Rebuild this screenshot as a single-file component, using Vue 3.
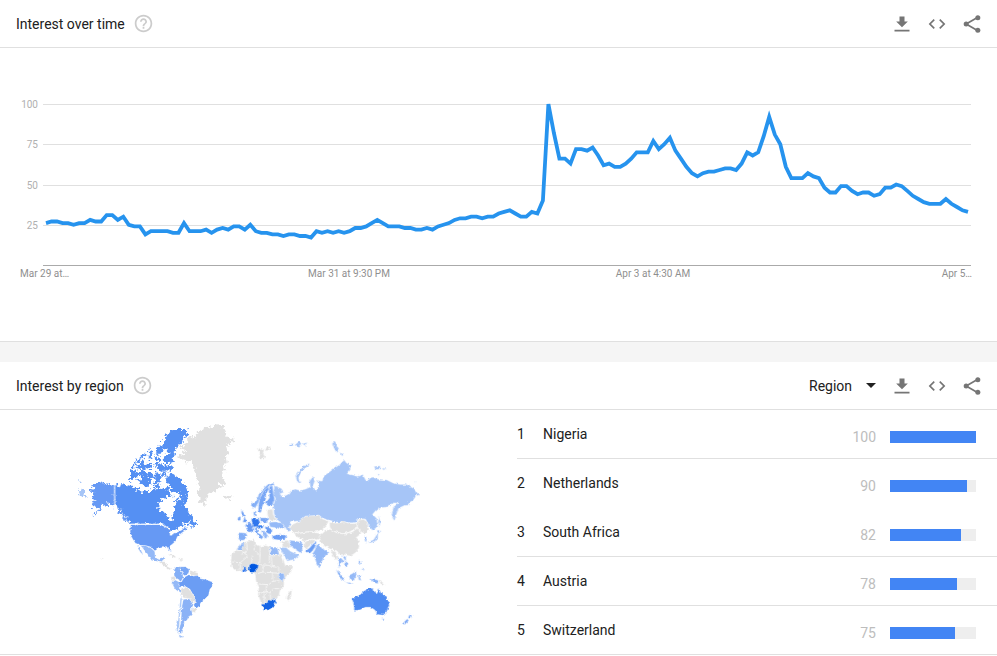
<script setup>
import { ref } from 'vue'

const metric = ref('Region')

const values = [
  26, 27, 27, 26, 26, 25, 26, 26, 28, 27, 27, 31, 31, 28, 30, 25, 24, 24, 19, 21, 21, 21, 21, 20,
  20, 26, 21, 21, 21, 22, 20, 22, 23, 22, 24, 24, 22, 25, 21, 20, 20, 19, 19, 18, 19, 19, 18, 18,
  17, 21, 20, 21, 20, 21, 20, 21, 23, 23, 24, 26, 28, 26, 24, 24, 24, 23, 23, 22, 22, 23, 22, 24,
  25, 26, 28, 29, 29, 30, 30, 29, 30, 30, 32, 33, 34, 32, 30, 30, 33, 32, 40, 100, 82, 66, 66, 63,
  72, 72, 71, 73, 68, 62, 63, 61, 61, 63, 66, 70, 70, 70, 77, 72, 75, 79, 71, 66, 61, 57, 55, 57,
  58, 58, 59, 60, 60, 59, 63, 70, 68, 70, 80, 92, 81, 75, 61, 54, 54, 54, 57, 55, 54, 48, 45, 45,
  49, 49, 46, 44, 45, 45, 43, 44, 48, 48, 50, 49, 46, 43, 41, 39, 38, 38, 38, 41, 38, 36, 34, 33
]

const yFor = (v) => 173 - v * 1.61
const line = values
  .map((v, i) => `${(46 + (i * 922) / (values.length - 1)).toFixed(1)},${yFor(v).toFixed(1)}`)
  .join(' ')

const gridLines = [
  { label: '100', y: 12 },
  { label: '75', y: 52 },
  { label: '50', y: 93 },
  { label: '25', y: 133 }
]

const regions = [
  { name: 'Nigeria', value: 100 },
  { name: 'Netherlands', value: 90 },
  { name: 'South Africa', value: 82 },
  { name: 'Austria', value: 78 },
  { name: 'Switzerland', value: 75 }
]

/* Map shapes, one group per quadrant. Each shape is [fill, points]. */
const G = '#e0e0e0'
const CA = '#5590f3'
const US = '#6699f4'
const RU = '#a6c5f7'
const northWest = [
  [G, '330,98 340,92 346,80 358,66 378,62 392,45 410,38 428,30 445,28 462,34 458,44 470,50 466,62 480,68 494,72 484,84 472,92 476,108 468,124 470,140 462,152 466,166 456,178 464,196 460,210 446,206 450,216 434,226 420,238 410,252 406,268 398,271 390,258 386,240 388,220 380,200 384,186 374,168 372,150 360,140 336,136 328,124 346,112 336,104'],
  [G, '464,242 478,240 488,240 486,250 474,254 468,250'],
  [CA, '134,211 150,214 160,207 176,214 192,216 205,226 222,230 238,228 250,222 262,226 276,218 290,216 300,228 296,244 280,250 268,262 264,276 272,288 290,296 300,318 308,316 306,298 316,286 312,264 320,254 336,256 344,268 354,290 368,304 372,316 358,320 345,326 330,334 318,346 304,352 300,342 288,334 270,328 184,328 176,316 166,300 156,286 146,276 134,272'],
  [CA, '286,188 302,176 322,184 332,196 344,206 350,222 356,238 350,258 340,262 328,248 332,238 318,232 304,224 298,210 290,204'],
  [CA, '204,194 214,188 226,184 236,194 246,206 238,216 222,214 212,206'],
  [CA, '180,170 192,166 206,176 198,192 180,198'],
  [CA, '276,72 288,60 302,48 322,42 344,42 356,50 346,66 334,84 324,96 314,108 304,116 292,108 280,98 284,82'],
  [CA, '260,92 278,90 280,108 272,120 262,110'],
  [CA, '284,122 302,110 316,112 310,128 302,142 286,146 278,134'],
  [CA, '202,150 216,142 228,150 220,164 204,160'],
  [CA, '186,150 200,144 198,160 186,160'],
  [CA, '228,148 242,142 252,152 240,162 228,158'],
  [CA, '256,148 272,144 288,152 304,150 306,164 284,168 268,166 256,160'],
  [CA, '234,168 252,168 254,186 242,196 230,182'],
  [CA, '256,176 270,172 276,188 268,206 254,196'],
  [CA, '278,168 290,170 288,184 278,186'],
  [CA, '196,134 208,124 214,134 204,142'],
  [CA, '234,112 248,104 252,118 240,128 232,120'],
  [CA, '252,128 264,118 272,134 260,144'],
  [CA, '212,120 226,116 224,130 214,128'],
  [CA, '204,172 220,166 234,176 222,186 208,182'],
  [CA, '248,206 262,206 270,216 256,222'],
  [CA, '286,238 302,230 310,246 296,252'],
  [CA, '358,318 370,314 378,328 366,334 360,328'],
  [CA, '340,334 356,328 352,338 342,342'],
  [US, '66,208 80,206 92,202 110,206 134,211 134,274 120,270 106,268 96,274 90,286 78,298 68,304 78,290 84,280 70,274 66,264 78,258 64,244 76,236 62,226 76,220'],
  [US, '134,274 146,278 156,288 168,304 178,324 168,316 156,298'],
  [RU, '24,220 34,224 48,236 46,246 34,244 26,234'],
  [RU, '24,198 34,196 32,206']
]
const southWest = [
  [US, '182,12 270,12 288,22 302,30 300,46 318,38 335,30 345,22 352,28 336,38 322,50 318,62 308,72 300,78 304,96 298,92 290,80 276,80 262,84 254,92 244,82 228,78 212,76 196,70 186,54 180,36'],
  ['#94b9f7', '212,76 230,78 244,84 254,94 256,110 264,118 274,112 284,110 280,122 268,126 254,122 240,116 232,102 222,90'],
  ['#94b9f7', '202,78 210,80 214,92 220,104 212,98 204,86'],
  [G, '266,126 280,122 290,130 294,140 304,146 298,150 288,142'],
  [G, '296,102 312,106 322,114 308,112'],
  [G, '326,116 340,118 336,122 326,120'],
  ['#84aff6', '312,150 318,140 328,138 328,150 338,158 340,172 334,184 324,178 312,170'],
  ['#78a6f5', '330,140 346,140 358,148 356,160 344,168 338,158 330,150'],
  [G, '358,150 386,160 384,168 362,166'],
  [G, '302,172 314,168 318,178 306,184'],
  ['#94b9f7', '304,186 316,180 328,186 334,194 328,204 334,218 326,216 314,206'],
  ['#6b9df4', '334,186 342,172 356,164 370,168 382,166 392,176 406,178 428,186 430,196 420,208 416,226 404,238 394,246 386,260 378,266 370,254 376,246 374,236 366,222 360,208 346,200 330,202 326,192'],
  [G, '332,206 346,200 360,210 368,222 376,238 374,250 362,246 358,236 340,234 334,220'],
  [G, '366,262 380,268 374,278 366,274'],
  ['#8bb2f6', '340,238 358,236 366,248 370,256 364,266 368,284 356,290 352,300 342,308 342,320 336,330 334,342 324,336 332,310 334,280 336,256'],
  [RU, '332,222 336,238 334,260 330,290 328,320 322,334 330,346 322,338 318,322 324,300 328,264'],
  [RU, '324,344 334,346 342,352 330,354'],
  [G, '90,114 98,114 96,118']
]
const northEast = [
  [G, '110,104 122,98 132,104 130,116 136,126 126,134 118,124 120,112'],
  [G, '134,96 152,94 150,104 138,108'],
  [RU, '206,90 216,84 220,92 210,96'],
  [RU, '224,90 238,78 244,86 234,98'],
  [RU, '246,86 262,82 256,92'],
  [RU, '164,212 184,220 192,232 180,236 188,246 206,236 214,226 226,222 240,226 256,222 270,216 268,198 280,184 284,200 278,214 288,226 296,212 290,196 306,198 312,182 326,172 342,160 360,148 372,134 380,144 394,150 390,166 382,176 400,180 412,184 428,178 438,196 456,186 476,192 500,194 520,204 540,208 560,208 584,222 600,244 590,240 580,256 566,264 570,270 552,272 536,280 530,296 522,318 514,300 520,276 534,264 518,264 504,276 484,278 468,286 458,298 470,310 474,326 468,340 456,346 446,330 436,312 414,312 410,322 394,324 370,320 352,322 328,316 308,310 296,300 276,304 256,304 240,318 214,320 208,334 216,346 204,350 196,338 184,324 168,312 162,296 160,270 166,250 158,236'],
  [RU, '230,196 226,182 240,164 252,152 268,144 268,150 250,164 240,178 236,192 244,204 236,204'],
  [RU, '336,84 344,80 352,92 358,104 350,114 342,100'],
  [RU, '360,112 372,118 366,124'],
  [RU, '462,154 480,152 482,162 466,164'],
  [RU, '486,158 500,160 490,166'],
  [RU, '472,176 480,178 474,182'],
  [RU, '584,198 590,200 584,204'],
  [RU, '476,302 482,322 478,338 474,322'],
  [RU, '472,344 484,348 474,356 474,368 464,380 450,384 444,380 460,374 468,362'],
  [G, '212,330 240,318 256,304 276,302 296,302 308,312 326,318 320,330 306,344 290,350 262,350 240,354 222,352 210,342'],
  [G, '328,322 352,324 372,320 394,326 414,324 410,338 390,350 370,356 346,350 330,340'],
  [G, '414,316 432,312 444,328 446,344 436,356 424,352 412,336'],
  ['#84aff6', '96,264 110,256 116,238 130,220 144,208 160,204 164,210 148,214 132,226 122,244 116,262 104,282 96,280'],
  ['#78a6f5', '120,248 130,228 142,216 148,222 138,236 138,252 128,272 122,294 114,290 116,264'],
  ['#78a6f5', '148,214 158,212 160,234 164,252 158,270 144,274 138,262 148,248 146,230'],
  [G, '142,284 158,282 160,298 168,312 158,320 146,312 142,298'],
  ['#6b9df4', '64,284 72,294 76,310 82,322 68,322 72,308 64,298'],
  ['#6b9df4', '54,306 62,304 62,316 52,318'],
  ['#84aff6', '100,292 108,286 110,300 102,306'],
  ['#2f76ed', '94,310 116,308 120,326 116,336 98,336'],
  ['#3b80f0', '118,330 132,330 128,340 110,342 100,340'],
  ['#78a6f5', '120,308 144,308 142,324 122,322'],
  ['#6b9df4', '74,330 92,322 102,336 98,350 84,352 80,340'],
  ['#84aff6', '56,352 78,354 82,362 72,376 58,376 54,366'],
  ['#78a6f5', '102,344 114,344 118,354 130,366 124,374 114,360 104,352'],
  ['#94b9f7', '146,322 166,320 186,324 192,334 178,342 166,338 150,336'],
  ['#6b9df4', '134,334 148,336 158,348 148,358 138,352'],
  ['#94b9f7', '122,346 136,348 144,362 136,374 130,362']
]
const southEast = [
  [G, '72,66 90,62 102,58 106,72 122,78 136,76 150,80 172,82 178,96 188,112 196,136 220,138 214,154 200,168 192,182 192,196 180,212 178,226 168,234 164,252 146,270 132,272 124,252 114,224 116,200 108,184 106,170 104,160 88,156 76,152 48,154 34,140 32,126 34,104 46,90 56,78'],
  ['#94b9f7', '50,90 60,72 72,66 72,78 62,90'],
  ['#0056e0', '88,134 98,130 116,134 114,144 104,156 94,158 86,150'],
  ['#2f76ed', '70,140 78,140 78,156 70,156'],
  ['#94b9f7', '150,80 172,82 178,104 150,106'],
  ['#94b9f7', '176,160 192,160 194,172 186,184 176,174'],
  ['#1565e6', '126,254 140,248 150,242 162,234 168,244 164,258 150,268 132,274'],
  [G, '202,222 216,206 214,228 206,242 200,236'],
  ['#6b9df4', '156,48 170,44 190,44 202,50 196,60 176,60 158,58'],
  [G, '184,64 204,60 212,76 204,84 188,80'],
  [RU, '178,82 198,82 212,94 226,100 238,106 224,118 202,124 192,108'],
  ['#94b9f7', '208,60 228,62 246,66 248,94 240,98 224,88 212,78'],
  [G, '222,38 240,40 262,36 290,38 306,42 300,54 290,60 278,56 262,60 250,66 248,58 232,52'],
  [G, '250,68 276,58 290,62 276,72 262,84 252,86'],
  ['#6b9df4', '254,94 268,84 278,72 290,64 286,80 278,92 270,100'],
  ['#94b9f7', '290,72 300,78 308,86 322,92 326,98 312,112 304,130 298,146 290,134 284,112 276,102 284,90'],
  [G, '302,62 296,50 318,30 332,28 350,38 372,42 396,36 412,24 424,40 408,54 416,62 418,80 412,94 398,104 388,108 374,104 360,104 350,92 332,88 316,80 306,72'],
  [G, '332,92 346,94 352,110 348,122 340,110'],
  ['#94b9f7', '354,112 364,114 372,124 362,132 358,146 354,130'],
  ['#94b9f7', '366,106 378,110 378,122 386,132 376,142 372,134 376,124'],
  ['#78a6f5', '434,44 440,58 438,68 434,60'],
  ['#84aff6', '348,148 360,158 370,174 376,186 364,178 354,162'],
  ['#94b9f7', '376,186 392,188 402,192 386,192'],
  ['#94b9f7', '386,166 398,160 408,152 410,166 402,182 390,178'],
  ['#94b9f7', '414,166 426,162 420,170 424,182 416,180'],
  ['#94b9f7', '416,118 424,124 422,134 416,128'],
  ['#94b9f7', '424,146 434,148 430,154'],
  ['#84aff6', '450,176 460,178 474,180 474,192 462,188'],
  [G, '476,180 490,188 496,196 482,192'],
  ['#4e8bf2', '396,238 400,232 418,226 430,214 444,206 458,204 460,212 470,218 476,204 484,220 494,226 506,242 508,258 500,276 490,286 474,284 464,270 452,262 436,262 420,270 402,272 402,256'],
  ['#6b9df4', '484,296 492,296 490,306'],
  ['#78a6f5', '568,284 576,286 572,296 564,294'],
  ['#78a6f5', '562,296 566,302 554,314 546,312']
]
const africaBorders =
  'M62,92 82,106 M80,68 82,90 64,104 M104,74 102,90 120,106 M120,78 120,108 M148,84 148,130 M82,110 60,128 36,126 M60,128 62,152 M86,134 84,156 M98,108 94,128 M120,108 118,136 M148,108 178,106 M118,134 144,136 170,142 M130,138 128,156 108,162 M128,156 156,158 176,160 M158,158 158,184 146,194 116,192 M158,184 178,182 M140,194 138,216 116,220 M138,216 152,216 162,204 M132,220 134,250 M150,214 152,240 M178,206 164,206 M154,110 156,136 M176,138 176,160 M46,90 64,92'
</script>

<template>
  <main class="page">
    <section class="card">
      <header class="bar">
        <h2>Interest over time</h2>
        <button class="help" aria-label="Help">
          <svg viewBox="0 0 24 24"><path d="M11 18h2v-2h-2v2zm1-16C6.480 2 2 6.480 2 12s4.480 10 10 10 10-4.480 10-10S17.520 2 12 2zm0 18c-4.410 0-8-3.590-8-8s3.590-8 8-8 8 3.590 8 8-3.590 8-8 8zm0-14c-2.210 0-4 1.790-4 4h2c0-1.100.9-2 2-2s2 .9 2 2c0 2-3 1.750-3 5h2c0-2.250 3-2.500 3-5 0-2.210-1.790-4-4-4z" /></svg>
        </button>
        <div class="actions">
          <button aria-label="Download"><svg viewBox="0 0 24 24"><path d="M19 9h-4V3H9v6H5l7 7 7-7zM3 19v2h18v-2H3z" /></svg></button>
          <button aria-label="Embed"><svg viewBox="0 0 24 24"><path d="M9.400 16.600L4.800 12l4.600-4.600L8 6l-6 6 6 6 1.400-1.400zm5.200 0l4.600-4.600-4.600-4.600L16 6l6 6-6 6-1.400-1.400z" /></svg></button>
          <button aria-label="Share"><svg viewBox="0 0 24 24"><path d="M5 12 19 4M5 12l14 8" stroke="currentColor" stroke-width="2" /><circle cx="5" cy="12" r="3" /><circle cx="19" cy="4.500" r="3" /><circle cx="19" cy="19.500" r="3" /></svg></button>
        </div>
      </header>
      <div class="chart">
        <svg viewBox="0 0 997 190" role="img" aria-label="Interest over time">
          <g v-for="g in gridLines" :key="g.label">
            <rect x="43" :y="g.y" width="928" height="1" fill="#e0e0e0" />
            <text x="38" :y="g.y + 4" text-anchor="end" class="tick">{{ g.label }}</text>
          </g>
          <rect x="43" y="173" width="928" height="1" fill="#aaa" />
          <polyline :points="line" fill="none" stroke="#2693ee" stroke-width="3.800" />
          <text x="20" y="185" class="date">Mar 29 at…</text>
          <text x="349" y="185" text-anchor="middle" class="date">Mar 31 at 9:30 PM</text>
          <text x="653" y="185" text-anchor="middle" class="date">Apr 3 at 4:30 AM</text>
          <text x="972" y="185" text-anchor="end" class="date">Apr 5…</text>
        </svg>
      </div>
    </section>

    <section class="card">
      <header class="bar">
        <h2>Interest by region</h2>
        <button class="help" aria-label="Help">
          <svg viewBox="0 0 24 24"><path d="M11 18h2v-2h-2v2zm1-16C6.480 2 2 6.480 2 12s4.480 10 10 10 10-4.480 10-10S17.520 2 12 2zm0 18c-4.410 0-8-3.590-8-8s3.590-8 8-8 8 3.590 8 8-3.590 8-8 8zm0-14c-2.210 0-4 1.790-4 4h2c0-1.100.9-2 2-2s2 .9 2 2c0 2-3 1.750-3 5h2c0-2.250 3-2.500 3-5 0-2.210-1.790-4-4-4z" /></svg>
        </button>
        <div class="actions">
          <div class="picker">
            <select v-model="metric" aria-label="Resolution">
              <option>Region</option>
            </select>
            <svg viewBox="0 0 10 5"><path d="M0 0h10L5 5z" /></svg>
          </div>
          <button aria-label="Download"><svg viewBox="0 0 24 24"><path d="M19 9h-4V3H9v6H5l7 7 7-7zM3 19v2h18v-2H3z" /></svg></button>
          <button aria-label="Embed"><svg viewBox="0 0 24 24"><path d="M9.400 16.600L4.800 12l4.600-4.600L8 6l-6 6 6 6 1.400-1.400zm5.200 0l4.600-4.600-4.600-4.600L16 6l6 6-6 6-1.400-1.400z" /></svg></button>
          <button aria-label="Share"><svg viewBox="0 0 24 24"><path d="M5 12 19 4M5 12l14 8" stroke="currentColor" stroke-width="2" /><circle cx="5" cy="12" r="3" /><circle cx="19" cy="4.500" r="3" /><circle cx="19" cy="19.500" r="3" /></svg></button>
        </div>
      </header>
      <div class="split">
        <div class="map">
          <svg viewBox="0 0 1074 675" role="img" aria-label="World map">
            <defs>
              <filter id="coast" x="0" y="0" width="100%" height="100%" color-interpolation-filters="sRGB">
                <feTurbulence type="fractalNoise" baseFrequency="0.12" numOctaves="2" seed="4" />
                <feDisplacementMap in="SourceGraphic" scale="10" xChannelSelector="R" yChannelSelector="G" />
              </filter>
              <filter id="arctic" x="0" y="0" width="100%" height="100%" color-interpolation-filters="sRGB">
                <feTurbulence type="fractalNoise" baseFrequency="0.09" numOctaves="3" seed="7" />
                <feDisplacementMap in="SourceGraphic" scale="30" xChannelSelector="R" yChannelSelector="G" />
              </filter>
            </defs>
            <g filter="url(#arctic)">
              <polygon v-for="(s, i) in northWest" :key="'a' + i" :fill="s[0]" :points="s[1]" />
            </g>
            <g filter="url(#coast)" stroke="#fff" stroke-width="1.500">
              <g transform="translate(0 315)">
                <polygon v-for="(s, i) in southWest" :key="'b' + i" :fill="s[0]" :points="s[1]" />
              </g>
              <g transform="translate(450 0)">
                <polygon v-for="(s, i) in northEast" :key="'c' + i" :fill="s[0]" :points="s[1]" />
              </g>
              <g transform="translate(450 315)">
                <polygon v-for="(s, i) in southEast" :key="'d' + i" :fill="s[0]" :points="s[1]" />
                <path :d="africaBorders" fill="none" stroke-width="2" />
              </g>
            </g>
            <path d="M134 204v74M178 328h94l22 10" fill="none" stroke="#fff" stroke-width="3" />
          </svg>
        </div>
        <ol class="ranking">
          <li v-for="(r, i) in regions" :key="r.name" :class="{ plain: i === 1 }">
            <span class="rank">{{ i + 1 }}</span>
            <span class="name">{{ r.name }}</span>
            <span class="value">{{ r.value }}</span>
            <span class="track"><span class="fill" :style="{ width: r.value + '%' }"></span></span>
          </li>
        </ol>
      </div>
    </section>
  </main>
</template>

<style>
body {
  background: #fff;
}
</style>

<style scoped>
.page {
  display: flex;
  flex-direction: column;
  gap: 20px;
  background: #f5f5f5;
  color: #212121;
  font: 14px/20px Roboto, sans-serif;
}
.card {
  background: #fff;
  border-bottom: 1px solid #e0e0e0;
}
.bar {
  display: flex;
  align-items: center;
  height: 47px;
  padding: 0 15px 0 16px;
  border-bottom: 1px solid #e0e0e0;
}
h2 {
  margin: 0;
  font-size: 14px;
  font-weight: 400;
}
button {
  display: flex;
  padding: 0;
  border: 0;
  background: none;
  color: #757575;
  cursor: pointer;
}
svg {
  display: block;
  fill: currentColor;
}
.help {
  margin-left: 8px;
  color: #ccc;
}
.help svg {
  width: 21px;
  height: 21px;
}
.actions {
  display: flex;
  align-items: center;
  gap: 15px;
  margin-left: auto;
}
.actions button svg {
  width: 20px;
  height: 20px;
}
.picker {
  position: relative;
  display: flex;
  align-items: center;
}
select {
  appearance: none;
  width: 68px;
  padding: 0;
  border: 0;
  background: none;
  color: inherit;
  font: inherit;
}
.picker svg {
  position: absolute;
  right: 1px;
  width: 10px;
  pointer-events: none;
}
.chart {
  padding: 44px 0 59px;
}
.chart svg {
  width: 100%;
}
.tick,
.date {
  font-size: 10px;
  fill: #b0b0b0;
}
.date {
  fill: #8f8f8f;
}
.split {
  display: grid;
  grid-template-columns: 517fr 480fr;
}
.map {
  padding: 5px 89px 0 70px;
}
.map svg {
  width: 100%;
}
.ranking {
  margin: 0;
  padding: 0;
  list-style: none;
}
li {
  display: grid;
  grid-template-columns: 26px 1fr 40px 86px;
  align-items: center;
  box-sizing: border-box;
  height: 49px;
  padding-right: 21px;
  border-bottom: 1px solid #e0e0e0;
}
li.plain {
  border-color: transparent;
}
li:last-child {
  border: 0;
  height: 48px;
}
.value {
  padding-top: 6px;
  color: #bdbdbd;
  text-align: right;
  margin-right: 14px;
}
.track {
  height: 12px;
  margin-top: 6px;
  background: #eee;
}
.fill {
  display: block;
  height: 100%;
  background: #4285f4;
}
</style>
